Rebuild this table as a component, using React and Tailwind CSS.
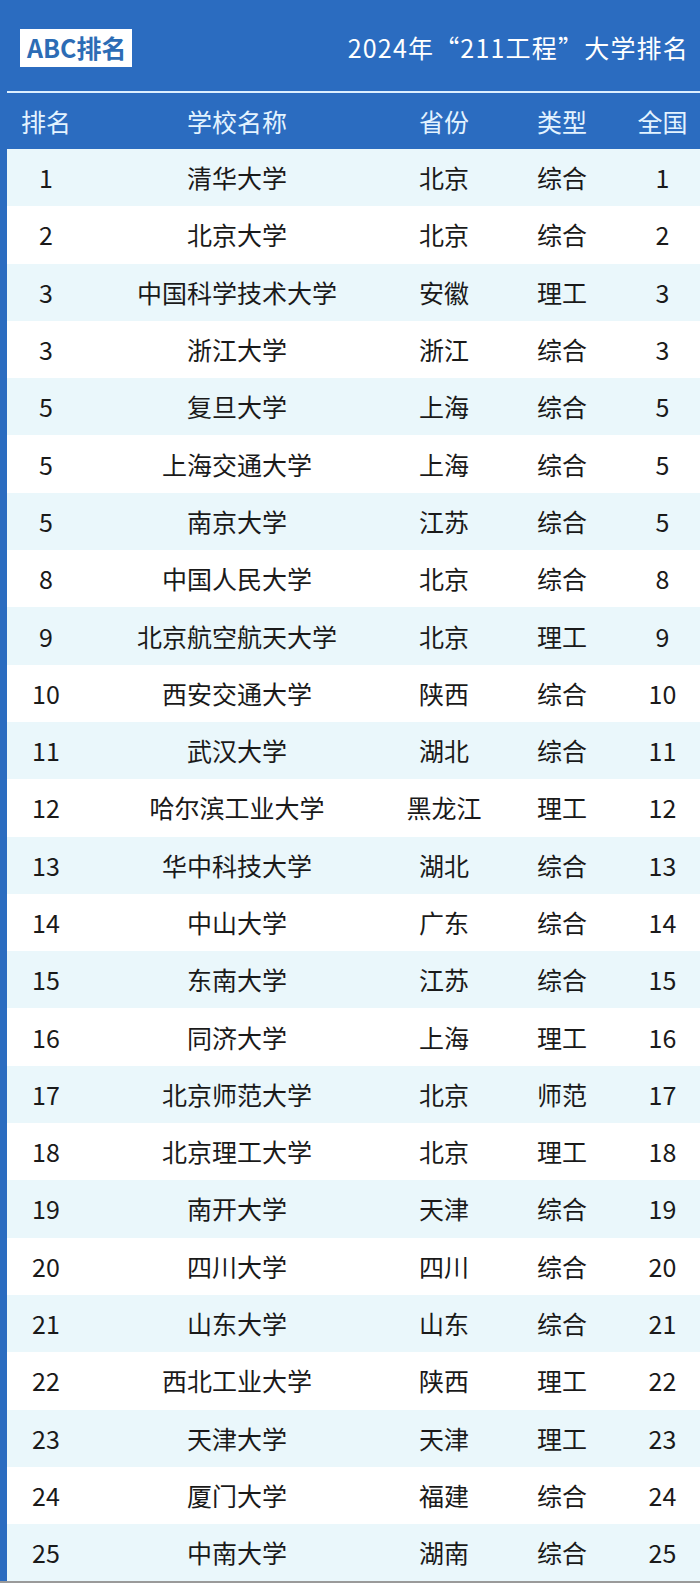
import React from "react";

const rows = [
  ["1", "清华大学", "北京", "综合", "1"],
  ["2", "北京大学", "北京", "综合", "2"],
  ["3", "中国科学技术大学", "安徽", "理工", "3"],
  ["3", "浙江大学", "浙江", "综合", "3"],
  ["5", "复旦大学", "上海", "综合", "5"],
  ["5", "上海交通大学", "上海", "综合", "5"],
  ["5", "南京大学", "江苏", "综合", "5"],
  ["8", "中国人民大学", "北京", "综合", "8"],
  ["9", "北京航空航天大学", "北京", "理工", "9"],
  ["10", "西安交通大学", "陕西", "综合", "10"],
  ["11", "武汉大学", "湖北", "综合", "11"],
  ["12", "哈尔滨工业大学", "黑龙江", "理工", "12"],
  ["13", "华中科技大学", "湖北", "综合", "13"],
  ["14", "中山大学", "广东", "综合", "14"],
  ["15", "东南大学", "江苏", "综合", "15"],
  ["16", "同济大学", "上海", "理工", "16"],
  ["17", "北京师范大学", "北京", "师范", "17"],
  ["18", "北京理工大学", "北京", "理工", "18"],
  ["19", "南开大学", "天津", "综合", "19"],
  ["20", "四川大学", "四川", "综合", "20"],
  ["21", "山东大学", "山东", "综合", "21"],
  ["22", "西北工业大学", "陕西", "理工", "22"],
  ["23", "天津大学", "天津", "理工", "23"],
  ["24", "厦门大学", "福建", "综合", "24"],
  ["25", "中南大学", "湖南", "综合", "25"],
];

const font = { fontFamily: '"Noto Sans CJK SC", "Noto Sans", sans-serif' };

export default function App() {
  return (
    <div className="w-[700px] h-[1585px] bg-white overflow-hidden" style={font}>
      <div className="bg-[#2b6cc0] pl-[7px] border-b-2 border-[#9a9a9a]">
        <div className="h-[91px] flex items-center justify-between pt-[4px] pl-[13px] pr-[11px]">
          <div className="h-[38px] w-[112px] bg-white flex items-center pl-[7px] text-[25px] font-bold text-[#2c6cb5] leading-none">
            ABC排名
          </div>
          <div className="text-white text-[25px] leading-none tracking-[1.2px]">2024年“211工程”大学排名</div>
        </div>
        <div className="h-[2px] bg-[#dcefff]" />
        <div className="h-[56px] grid grid-cols-[78px_304px_110px_126px_1fr] items-center text-center text-[25px] text-[#e3f3ff] leading-none">
          <div>排名</div>
          <div>学校名称</div>
          <div>省份</div>
          <div>类型</div>
          <div>全国</div>
        </div>
        {rows.map((r, i) => (
          <div
            key={i}
            className={
              "h-[57.3px] grid grid-cols-[78px_304px_110px_126px_1fr] items-center text-center text-[25px] text-[#1a1a1a] leading-none " +
              (i % 2 === 0 ? "bg-[#eaf7fb]" : "bg-white")
            }
          >
            <div>{r[0]}</div>
            <div>{r[1]}</div>
            <div>{r[2]}</div>
            <div>{r[3]}</div>
            <div>{r[4]}</div>
          </div>
        ))}
      </div>
    </div>
  );
}
